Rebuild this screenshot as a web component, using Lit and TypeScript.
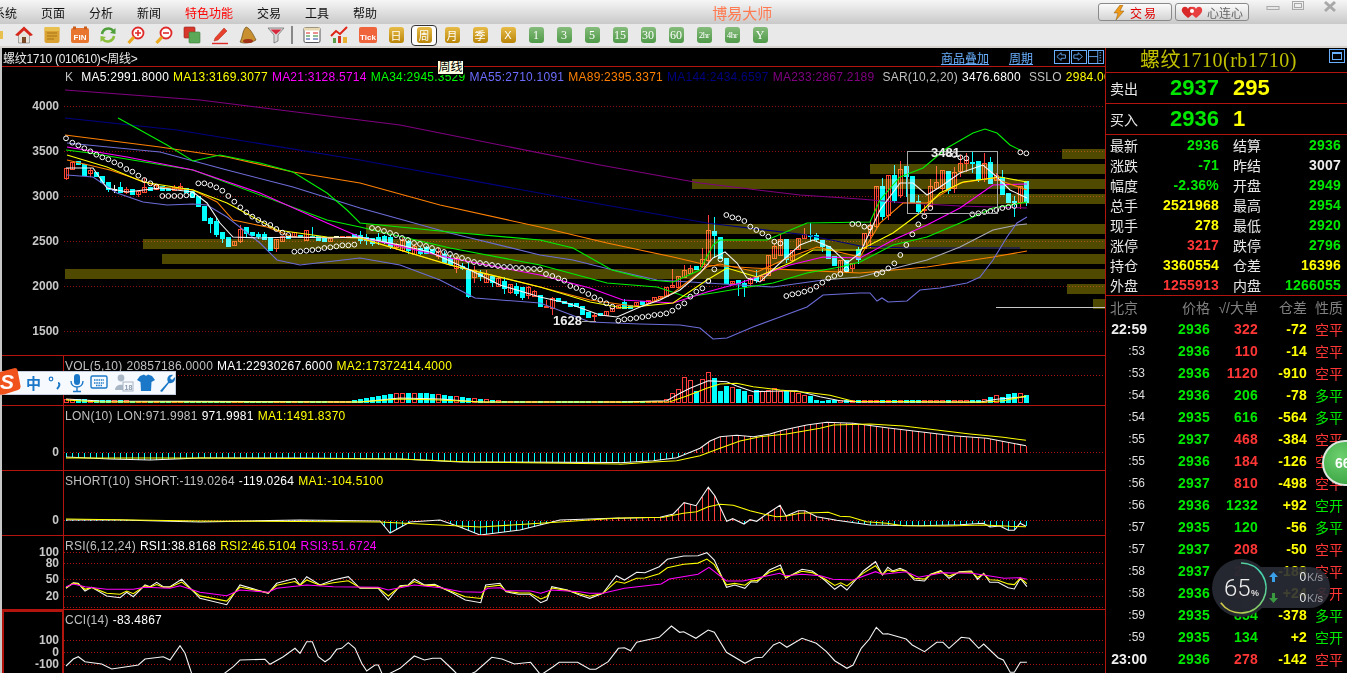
import { LitElement, html, svg, css } from "lit";
import { customElement } from "lit/decorators.js";

type P = [number, number];
const conv = (a: number[], ox: number, oy: number, sx = 3, sy = 3): P[] => {
  const r: P[] = [];
  for (let i = 0; i < a.length; i += 2) r.push([ox + a[i] / sx, oy + a[i + 1] / sy]);
  return r;
};
const Z7 = (a: number[]) => conv(a, 860, 120);
const Z8 = (a: number[]) => conv(a, 540, 200);
const Z10 = (a: number[]) => conv(a, 60, 130);
const Z11 = (a: number[]) => conv(a, 620, 360);
const Z12 = (a: number[]) => conv(a, 400, 535, 2.45, 3);
const Z9 = (a: number[]) => conv(a, 0, 530);
const str = (p: P[]) => p.map((q) => q[0].toFixed(1) + "," + q[1].toFixed(1)).join(" ");
const at = (p: P[], x: number) => {
  if (x <= p[0][0]) return p[0][1];
  for (let i = 1; i < p.length; i++) {
    if (x <= p[i][0]) {
      const t = (x - p[i - 1][0]) / (p[i][0] - p[i - 1][0] || 1);
      return p[i - 1][1] + t * (p[i][1] - p[i - 1][1]);
    }
  }
  return p[p.length - 1][1];
};

const MA5: P[] = [[66, 168], [93, 168], [107, 188], [127, 192], [160, 188], [193, 192], [207, 203], [220, 223], [233, 237], [260, 238], [293, 237], [327, 238], [360, 237], [400, 245], [430, 252], [470, 270], [500, 285], [540, 297], [567, 303], [600, 315], [617, 317], [640, 307], [660, 300], [680, 290], [700, 273], [713, 258], [725, 252], [737, 263], [747, 278], [760, 282], [780, 263], [800, 245], [813, 240], [830, 247], [847, 263], [860, 253], [880, 210], [900, 183], [913, 183], [927, 195], [940, 187], [960, 173], [983, 165], [997, 177], [1010, 190], [1027, 198]];
const LINES: { c: string; p: P[] }[] = [
  { c: "purple", p: [[65, 90], [200, 100], [400, 125], [600, 165], [700, 183], [800, 195], [860, 199], [907, 203], [960, 206], [1027, 208]] },
  { c: "navy", p: [[65, 118], [177, 130], [360, 160], [577, 200], [707, 223], [807, 235], [860, 246], [907, 248], [1020, 248]] },
  { c: "orange", p: [[65, 135], [160, 147], [227, 157], [293, 172], [360, 183], [440, 205], [540, 227], [607, 243], [673, 257], [707, 265], [753, 268], [860, 273], [927, 267], [993, 257], [1027, 251]] },
  { c: "blue", p: [[67, 143], [160, 152], [227, 170], [293, 187], [360, 208], [450, 233], [540, 255], [573, 260], [613, 270], [657, 280], [707, 283], [773, 287], [823, 280]] },
  { c: "grayblue", p: [[823, 280], [860, 277], [927, 260], [960, 247], [993, 230], [1017, 225], [1027, 224]] },
  { c: "blue", p: [[67, 175], [93, 177], [117, 193], [143, 202], [167, 205], [193, 204], [207, 205], [227, 217], [260, 243], [277, 260], [300, 265], [360, 258], [400, 265], [440, 280], [475, 298], [540, 303], [590, 322], [640, 324], [680, 325], [700, 328], [713, 339], [727, 338], [753, 327], [780, 317], [807, 307], [823, 295], [860, 293], [870, 293], [877, 301], [882, 298], [888, 302], [907, 301], [920, 290], [940, 288], [967, 283], [980, 277], [993, 260], [1007, 237], [1017, 223], [1027, 217]] },
  { c: "green", p: [[118, 118], [140, 130], [167, 145], [193, 161], [220, 155], [260, 163], [293, 172], [327, 193], [347, 210], [360, 223], [450, 232], [540, 240], [573, 248], [612, 270], [650, 280], [673, 282], [700, 270], [713, 245], [720, 240], [767, 240], [807, 223], [870, 222], [880, 200], [900, 177], [923, 168], [947, 148], [973, 133], [985, 129], [997, 133], [1010, 145], [1020, 150]] },
  { c: "green", p: [[66, 150], [90, 153], [193, 170], [327, 220], [360, 227], [450, 248], [540, 265], [607, 283], [657, 287], [687, 297], [713, 293], [773, 283], [807, 273], [840, 267], [860, 262], [893, 245], [927, 237], [960, 223], [993, 208], [1027, 202]] },
  { c: "magenta", p: [[67, 147], [127, 157], [193, 170], [260, 193], [327, 223], [360, 237], [450, 258], [540, 275], [590, 288], [623, 300], [673, 303], [707, 292], [740, 283], [790, 265], [823, 257], [860, 258], [893, 240], [927, 225], [960, 208], [993, 185], [1027, 184]] },
  { c: "orange", p: [[67, 160], [110, 170], [160, 187], [193, 190], [217, 202], [233, 220], [267, 227], [293, 237], [360, 238], [450, 265], [540, 287], [590, 300], [640, 307], [673, 293], [707, 267], [720, 264], [757, 272], [790, 257], [817, 247], [860, 257], [880, 223], [903, 203], [927, 203], [960, 183], [993, 178], [1027, 190]] },
  { c: "yellow", p: [[67, 155], [107, 167], [143, 182], [193, 190], [227, 203], [277, 230], [327, 237], [360, 238], [450, 265], [540, 287], [590, 302], [623, 308], [673, 303], [707, 280], [727, 268], [757, 277], [790, 263], [813, 250], [860, 250], [893, 233], [920, 213], [940, 193], [963, 182], [1000, 177], [1027, 182]] },
  { c: "white", p: MA5 },
];

const SAR: P[] = [
  ...Z10([18, 25, 37, 38, 55, 46, 73, 55, 91, 64, 109, 74, 127, 82, 145, 88, 163, 97, 181, 105, 199, 117, 217, 125, 235, 137, 253, 150, 271, 160, 289, 170, 307, 198, 325, 198, 343, 198, 361, 198, 379, 196, 397, 195, 415, 160, 433, 160, 451, 165, 469, 172, 487, 182, 505, 198, 523, 215, 541, 232, 559, 247, 577, 260, 595, 270, 613, 280, 631, 285, 649, 297, 667, 308, 685, 315, 703, 365, 721, 364, 739, 362, 757, 360, 775, 358, 793, 354, 811, 352, 829, 349, 847, 346, 865, 346, 883, 344]),
  [372, 228], [378, 229], [384, 231], [390, 233], [396, 235], [402, 238], [408, 240], [414, 243], [420, 244], [426, 246], [432, 248], [438, 250], [444, 252], [450, 254], [456, 256], [462, 258], [468, 260], [474, 262], [480, 263], [486, 264], [492, 265], [498, 266], [504, 267], [510, 267], [516, 268], [522, 268], [528, 269], [534, 269],
  ...Z8([0, 208, 18, 222, 37, 228, 55, 235, 73, 242, 91, 258, 109, 264, 127, 272, 145, 282, 163, 292, 181, 300, 199, 310, 217, 320, 235, 362, 253, 358, 271, 356, 289, 354, 307, 351, 325, 349, 343, 345, 361, 343, 379, 340, 397, 332, 415, 320, 433, 310, 451, 290, 469, 275, 487, 265, 505, 243, 523, 208, 541, 178, 559, 45, 577, 52, 595, 55, 613, 63, 631, 80, 649, 90, 667, 100, 685, 110, 703, 125, 721, 130, 739, 288, 757, 283, 775, 280, 793, 275, 811, 270, 829, 260, 847, 248, 865, 235, 883, 228, 901, 222, 919, 208, 937, 72, 955, 72]),
  ...Z7([13, 320, 30, 322, 50, 462, 67, 457, 85, 445, 103, 430, 121, 405, 139, 375, 157, 343, 175, 313, 193, 289, 211, 264, 265, 100, 283, 105, 301, 112, 319, 115, 337, 283, 355, 280, 373, 276, 391, 273, 409, 270, 427, 264, 445, 261, 463, 258, 481, 97, 499, 100]),
];

type C = { x: number; t: number; b: number; wt: number; wb: number; c: string };
const tbl = (ox: number, oy: number, rows: (string | number)[][]) =>
  rows.map((r) => {
    const t = oy + (r[2] as number) / 3, b = oy + (r[3] as number) / 3;
    return {
      x: ox + (r[1] as number) / 3, t, b,
      wt: r[4] !== undefined ? oy + (r[4] as number) / 3 : t,
      wb: r[5] !== undefined ? oy + (r[5] as number) / 3 : b,
      c: r[0] as string,
    } as C;
  });
const RAW: C[] = [
  ...tbl(60, 130, [["r", 18, 115, 145, 113, 150], ["r", 37, 97, 118], ["c", 55, 95, 103], ["c", 73, 102, 135], ["r", 91, 122, 130, 115, 142], ["c", 109, 127, 140], ["c", 127, 138, 157], ["c", 145, 157, 178, 155, 185], ["w", 163, 177, 179, 165, 188], ["c", 181, 173, 186, 157, 188], ["r", 199, 178, 187, 172, 192], ["c", 217, 178, 192], ["r", 235, 185, 192, 185, 200], ["r", 253, 173, 187, 145, 187], ["c", 271, 173, 180], ["r", 289, 165, 178], ["c", 307, 170, 180], ["c", 325, 176, 182], ["r", 343, 172, 180, 165, 182], ["r", 361, 170, 178, 158, 180], ["c", 379, 175, 187], ["c", 397, 185, 202], ["c", 415, 200, 230], ["c", 433, 228, 270], ["c", 451, 265, 280, 260, 310], ["c", 469, 275, 313, 260, 320], ["c", 487, 308, 325, 308, 340], ["c", 505, 322, 348], ["r", 523, 333, 345], ["r", 541, 298, 335, 285, 340], ["c", 559, 293, 310, 293, 320], ["c", 577, 308, 316], ["c", 595, 313, 320, 305, 328], ["c", 613, 312, 327, 305, 330], ["c", 631, 322, 362], ["r", 649, 327, 355, 327, 365], ["r", 667, 318, 335], ["c", 685, 318, 325], ["r", 703, 308, 318], ["c", 721, 316, 322], ["r", 739, 300, 332], ["c", 757, 318, 322, 290, 325], ["c", 775, 318, 330], ["c", 793, 325, 335], ["r", 811, 325, 335], ["w", 829, 319, 321], ["r", 847, 318, 322], ["r", 865, 318, 322], ["c", 883, 312, 320]]),
  ...tbl(467, 200, [["c", 0, 210, 290, 190, 295]]),
  ...tbl(540, 200, [["c", 0, 285, 320], ["r", 20, 318, 322, 300, 325], ["r", 38, 295, 325, 290, 345], ["c", 55, 295, 305], ["c", 73, 305, 310], ["c", 91, 310, 318], ["c", 109, 310, 320], ["c", 127, 320, 343], ["c", 145, 338, 352], ["r", 163, 347, 349, 338, 362], ["c", 181, 340, 346], ["r", 199, 335, 345], ["r", 217, 325, 335], ["r", 235, 315, 325], ["c", 253, 308, 325, 298, 325], ["c", 271, 315, 325], ["r", 289, 308, 315], ["c", 307, 305, 312], ["r", 325, 302, 310], ["r", 343, 292, 305], ["r", 361, 290, 294], ["r", 380, 262, 290], ["r", 398, 255, 262, 208, 262], ["r", 415, 228, 262], ["r", 433, 210, 232, 195, 232], ["r", 451, 205, 220, 195, 222], ["c", 469, 200, 208], ["r", 487, 178, 200, 145, 205], ["r", 500, 90, 180, 45, 195], ["c", 522, 95, 105, 50, 175], ["c", 541, 112, 175], ["c", 560, 175, 250], ["r", 578, 245, 250], ["c", 596, 240, 250, 240, 288], ["c", 614, 250, 258, 240, 290], ["r", 632, 235, 250, 230, 262], ["c", 650, 232, 240, 210, 250], ["r", 668, 228, 240], ["r", 686, 165, 225], ["r", 703, 140, 175, 130, 178], ["r", 721, 118, 165, 103, 168], ["c", 739, 118, 178, 118, 188], ["r", 757, 150, 180], ["r", 775, 115, 148], ["r", 793, 103, 115, 85, 118], ["c", 811, 107, 109, 70, 125], ["c", 829, 107, 118, 100, 125], ["c", 847, 120, 140, 120, 155], ["c", 865, 140, 175], ["c", 883, 170, 197], ["r", 901, 180, 215], ["c", 919, 182, 215], ["r", 937, 190, 205, 190, 215]]),
  ...tbl(860, 120, [["r", 14, 340, 385], ["r", 32, 320, 345, 300, 385], ["r", 50, 200, 320, 200, 325], ["c", 68, 200, 290, 175, 300], ["r", 85, 165, 285, 165, 300], ["c", 103, 165, 240, 135, 250], ["r", 121, 148, 225, 122, 235], ["c", 139, 140, 170, 140, 230], ["c", 157, 168, 248], ["c", 175, 245, 275, 225, 280], ["r", 193, 268, 270, 255, 285], ["r", 211, 198, 260, 178, 262], ["r", 229, 186, 205, 138, 205], ["r", 247, 152, 205, 150, 215], ["c", 265, 155, 210, 155, 222], ["r", 283, 158, 205, 140, 218], ["r", 301, 130, 155, 105, 170], ["r", 319, 120, 130, 100, 155], ["c", 337, 127, 129, 95, 160], ["c", 355, 125, 178, 125, 185], ["r", 373, 130, 178, 100, 185], ["c", 391, 128, 190, 110, 190], ["c", 427, 172, 222, 150, 225], ["c", 445, 220, 248], ["c", 463, 243, 248, 228, 290], ["r", 481, 198, 248, 198, 268], ["c", 499, 185, 248, 185, 258]]),
];
const CANDLES: C[] = (() => {
  const slots = new Map<number, C>();
  for (const c of RAW) slots.set(Math.round((1026 - c.x) / 6), c);
  let s = 12345;
  const rnd = () => ((s = (s * 1103515245 + 12345) & 0x7fffffff) / 0x7fffffff);
  const out: C[] = [];
  for (let k = 160; k >= 0; k--) {
    const x = 1026 - 6 * k;
    const have = slots.get(k);
    if (have) { out.push({ ...have, x }); continue; }
    const m = at(MA5, x) + (rnd() - 0.5) * 6;
    const h = 2 + rnd() * 8;
    const c = rnd() > 0.5 ? "c" : "r";
    out.push({ x, t: m - h / 2, b: m + h / 2, wt: m - h / 2 - rnd() * 5, wb: m + h / 2 + rnd() * 5, c });
  }
  return out;
})();

const OLIVE: number[][] = [[1062, 149], [870, 164], [692, 179], [907, 194], [366, 224], [143, 239], [162, 254], [65, 269], [1067, 284], [1093, 299]];

const VOL_BIG: Map<number, [number, string]> = (() => {
  const m = new Map<number, [number, string]>();
  const rows: [number, number, string][] = [[138, 118, "r"], [156, 100, "r"], [174, 88, "r"], [192, 52, "r"], [210, 62, "r"], [228, 93, "c"], [246, 58, "r"], [264, 37, "r"], [282, 54, "c"], [300, 93, "c"], [318, 78, "c"], [336, 82, "r"], [354, 87, "c"], [372, 93, "c"], [390, 105, "r"], [408, 92, "c"], [426, 95, "r"], [444, 92, "r"], [462, 85, "r"], [480, 95, "r"], [498, 93, "c"], [516, 93, "r"], [534, 100, "r"], [552, 105, "r"], [570, 110, "c"], [588, 122, "c"], [606, 123, "c"], [624, 122, "c"], [1074, 120, "c"], [1092, 118, "r"], [1110, 111, "c"], [1128, 106, "r"], [1146, 112, "c"], [1164, 102, "c"], [1182, 99, "c"], [1200, 100, "r"], [1218, 105, "c"]];
  for (const [zx, zy, c] of rows) m.set(Math.round(620 + zx / 3), [360 + zy / 3, c]);
  return m;
})();
const VOL_ENV: P[] = [[66, 399], [90, 400], [130, 401], [200, 401], [350, 401], [362, 399], [385, 395], [405, 393], [430, 394], [450, 396], [475, 399], [500, 401], [660, 401]];

const LON_W: P[] = [[66, 457], [110, 459], [150, 460], [200, 458], [300, 458], [400, 459], [460, 462], [619, 462.5], ...Z11([0, 308, 100, 302, 170, 293, 240, 265, 270, 243, 300, 230, 350, 226, 400, 230, 450, 222, 490, 210, 560, 195, 620, 187, 700, 190, 800, 203, 900, 215, 1000, 227, 1100, 235, 1218, 257])];
const LON_Y: P[] = [[66, 458], [200, 458], [400, 459], [470, 462], [619, 464], ...Z11([0, 313, 100, 306, 170, 302, 240, 287, 300, 265, 360, 243, 420, 230, 500, 222, 600, 205, 640, 195, 750, 192, 850, 198, 950, 210, 1050, 222, 1150, 232, 1218, 241])];
const SH_W: P[] = [[66, 520], [120, 520], [200, 522], [300, 520], [380, 521], [390, 533], [410, 522], [440, 520], [460, 527], [480, 535], [520, 530], [560, 520], [619, 518], ...Z11([0, 475, 120, 472, 160, 462, 192, 428, 228, 437, 265, 382, 285, 408, 320, 484, 338, 476, 372, 492, 390, 479, 410, 484, 440, 462, 480, 436, 498, 468, 535, 452, 555, 452, 590, 470, 650, 481, 750, 495, 900, 497, 1020, 494, 1090, 490, 1110, 501, 1140, 498, 1165, 511, 1183, 511, 1200, 490, 1218, 499])];
const SH_Y: P[] = [[66, 519], [200, 521], [380, 522], [420, 524], [480, 527], [560, 522], [619, 518], ...Z11([0, 474, 130, 472, 190, 460, 230, 455, 265, 440, 300, 433, 340, 436, 390, 452, 430, 462, 470, 470, 500, 468, 540, 460, 625, 457, 660, 469, 690, 470, 740, 485, 800, 490, 850, 497, 980, 498, 1090, 495, 1170, 499, 1218, 500])];
const VOL_W: P[] = [[66, 399], [100, 401], [360, 402], [400, 398], [440, 399], [480, 402], [619, 402], ...Z11([0, 126, 140, 122, 180, 100, 210, 85, 265, 62, 320, 65, 350, 78, 400, 95, 480, 93, 530, 92, 600, 110, 660, 122, 720, 126, 1080, 126, 1130, 118, 1218, 110])];
const VOL_Y: P[] = [[66, 400], [100, 402], [360, 402], [400, 399], [440, 400], [480, 402], [619, 402], ...Z11([0, 127, 150, 125, 200, 108, 260, 85, 300, 72, 350, 70, 400, 80, 480, 90, 570, 98, 630, 106, 700, 124, 1090, 127, 1150, 122, 1218, 108])];

const RSI_W: P[] = [...Z9([198, 175, 220, 158, 235, 160, 255, 183, 275, 172, 320, 198, 360, 203, 380, 187, 400, 200, 435, 165, 450, 170, 470, 157, 490, 170, 510, 170, 545, 148, 600, 205, 680, 224, 720, 165, 805, 190, 830, 160, 885, 145, 900, 165, 920, 140, 960, 165, 1000, 150, 1045, 140, 1080, 175, 1135, 175, 1165, 210]), ...Z12([0, 152, 20, 150, 35, 133, 60, 150, 85, 148, 130, 175, 160, 195, 198, 203, 210, 150, 245, 145, 260, 170, 290, 178, 318, 178, 345, 203, 360, 195, 372, 155, 410, 165, 440, 180, 465, 190, 497, 175, 530, 122, 550, 135, 580, 112, 600, 113, 635, 95, 655, 73, 695, 63, 730, 62, 752, 53, 770, 75, 800, 157, 820, 150, 845, 160, 860, 140, 875, 142, 905, 105, 932, 90, 945, 130, 985, 103, 1010, 108, 1040, 135, 1065, 163, 1080, 150, 1095, 165, 1135, 108, 1165, 80, 1182, 120, 1195, 97, 1207, 108, 1225, 100, 1240, 108, 1260, 135, 1285, 138, 1300, 118, 1325, 107, 1345, 130, 1370, 110, 1400, 108, 1415, 133, 1430, 115, 1445, 142, 1465, 142, 1490, 158, 1505, 162, 1520, 130, 1536, 155])];
const RSI_M: P[] = [...Z9([198, 170, 220, 162, 255, 170, 320, 178, 360, 178, 400, 178, 435, 172, 510, 175, 540, 167, 600, 187, 680, 197, 720, 180, 805, 187, 830, 175, 920, 165, 1000, 170, 1135, 172, 1165, 180]), ...Z12([0, 158, 35, 150, 100, 158, 150, 170, 200, 172, 215, 160, 245, 158, 260, 167, 320, 168, 345, 175, 370, 165, 440, 170, 465, 175, 497, 175, 550, 160, 640, 147, 660, 132, 730, 118, 757, 97, 800, 138, 840, 138, 930, 115, 945, 122, 985, 118, 1030, 122, 1060, 133, 1110, 135, 1165, 110, 1182, 118, 1240, 110, 1270, 127, 1330, 113, 1400, 115, 1430, 120, 1480, 130, 1520, 128, 1536, 133])];
const RSI_Y: P[] = RSI_W.map((p) => [p[0], p[1] * 0.6 + at(RSI_M, p[0]) * 0.4] as P);
const CCI: P[] = [...Z9([198, 408, 220, 387, 235, 380, 255, 395, 305, 402, 335, 417, 415, 405, 435, 387, 490, 380, 510, 390, 540, 347, 555, 370, 578, 440, 660, 440, 700, 410, 720, 390, 795, 388, 810, 403, 850, 380, 885, 355, 900, 370, 920, 335, 937, 335, 955, 380, 975, 395, 990, 385, 1010, 358, 1025, 355, 1045, 338, 1065, 355, 1085, 400, 1100, 423, 1125, 405, 1135, 405, 1150, 440]), ...Z12([0, 400, 35, 363, 60, 375, 80, 370, 100, 370, 130, 405, 150, 430, 185, 410, 225, 367, 250, 372, 280, 387, 320, 382, 345, 420, 375, 395, 390, 382, 435, 382, 465, 403, 480, 403, 510, 380, 535, 340, 550, 338, 565, 347, 580, 322, 635, 307, 665, 273, 685, 292, 695, 290, 725, 310, 755, 285, 770, 292, 800, 352, 845, 385, 870, 368, 888, 367, 915, 330, 930, 322, 948, 337, 985, 310, 1020, 325, 1045, 350, 1065, 377, 1095, 400, 1110, 390, 1130, 340, 1150, 312, 1167, 277, 1183, 297, 1195, 296, 1240, 312, 1255, 330, 1285, 350, 1315, 322, 1330, 322, 1345, 340, 1375, 307, 1395, 310, 1418, 340, 1430, 327, 1465, 368, 1478, 375, 1495, 412, 1505, 412, 1520, 382, 1536, 382])];

const STATS = [
  ["最新", "2936", "g", "结算", "2936", "g"], ["涨跌", "-71", "g", "昨结", "3007", "w"],
  ["幅度", "-2.36%", "g", "开盘", "2949", "g"], ["总手", "2521968", "y", "最高", "2954", "g"],
  ["现手", "278", "y", "最低", "2920", "g"], ["涨停", "3217", "r", "跌停", "2796", "g"],
  ["持仓", "3360554", "y", "仓差", "16396", "y"], ["外盘", "1255913", "r", "内盘", "1266055", "g"],
];
const TRADES = [
  ["22:59", "2936", "322", "r", "-72", "空平", "r"], [":53", "2936", "110", "r", "-14", "空平", "r"],
  [":53", "2936", "1120", "r", "-910", "空平", "r"], [":54", "2936", "206", "g", "-78", "多平", "g"],
  [":54", "2935", "616", "g", "-564", "多平", "g"], [":55", "2937", "468", "r", "-384", "空平", "r"],
  [":55", "2936", "184", "r", "-126", "空平", "r"], [":56", "2937", "810", "r", "-498", "空平", "r"],
  [":56", "2936", "1232", "g", "+92", "空开", "g"], [":57", "2935", "120", "g", "-56", "多平", "g"],
  [":57", "2937", "208", "r", "-50", "空平", "r"], [":58", "2937", "218", "r", "-188", "空平", "r"],
  [":58", "2936", "156", "r", "+24", "多开", "r"], [":59", "2935", "854", "g", "-378", "多平", "g"],
  [":59", "2935", "134", "g", "+2", "空开", "g"], ["23:00", "2936", "278", "r", "-142", "空平", "r"],
];
const MENU = ["系统", "页面", "分析", "新闻", "特色功能", "交易", "工具", "帮助"];
const PERIODS: [string, string][] = [["日", "gold"], ["周", "gold sel"], ["月", "gold"], ["季", "gold"], ["X", "gold"], ["1", "grn"], ["3", "grn"], ["5", "grn"], ["15", "grn"], ["30", "grn"], ["60", "grn"], ["2hr", "grn nar"], ["4hr", "grn nar"], ["Y", "grn"]];

const ICONS = [
  svg`<path d="M2 10 L10 2.5 L18 10 L15.5 10 L15.5 18 L4.5 18 L4.5 10Z" fill="#e8e4dc" stroke="#777" stroke-width=".6"/><path d="M1 10 L10 1.5 L19 10 L16 11 L10 5.5 L4 11Z" fill="#d8281c"/><rect x="8" y="12" width="4" height="6" fill="#7a4a28"/>`,
  svg`<rect x="2.5" y="2" width="15" height="16" rx="2" fill="#d9a233"/><rect x="2.5" y="2" width="15" height="4" fill="#e8c050"/><path d="M5 8h10M5 11h10M5 14h7" stroke="#a87414" stroke-width="1"/>`,
  svg`<rect x="1" y="3" width="18" height="15" rx="2" fill="#e8762e"/><rect x="3" y="1.5" width="3" height="3" fill="#c85a1c"/><rect x="14" y="1.5" width="3" height="3" fill="#c85a1c"/><text x="10" y="15" text-anchor="middle" class="ict">FIN</text>`,
  svg`<path d="M4 9 A6.5 6.5 0 0 1 15.5 6" fill="none" stroke="#4fa03a" stroke-width="2.6"/><path d="M17.5 3 L17.5 9 L12 8Z" fill="#4fa03a"/><path d="M16 11 A6.5 6.5 0 0 1 4.5 14" fill="none" stroke="#8bbf3c" stroke-width="2.6"/><path d="M2.5 17 L2.5 11 L8 12Z" fill="#8bbf3c"/>`,
  svg`<circle cx="12" cy="8" r="5.5" fill="#fff" stroke="#e02a2a" stroke-width="1.8"/><path d="M9 8h6M12 5v6" stroke="#e02a2a" stroke-width="1.6"/><path d="M8 12 L2.5 18" stroke="#eaa81e" stroke-width="3.2"/>`,
  svg`<circle cx="12" cy="8" r="5.5" fill="#fff" stroke="#e02a2a" stroke-width="1.8"/><path d="M9 8h6" stroke="#e02a2a" stroke-width="1.6"/><path d="M8 12 L2.5 18" stroke="#eaa81e" stroke-width="3.2"/>`,
  svg`<rect x="2" y="2" width="11" height="11" rx="1" fill="#d8382c" stroke="#96201a" stroke-width=".6"/><rect x="7" y="7" width="11" height="11" rx="1" fill="#5aa858" stroke="#3e7c3c" stroke-width=".6"/>`,
  svg`<path d="M5 13 L14 3 L17 6 L8 15 L4 16Z" fill="#e8402c" stroke="#a82818" stroke-width=".5"/><path d="M2 18.5h16" stroke="#e02a2a" stroke-width="1.4"/>`,
  svg`<path d="M8 2 C12 3 15 9 18 15 C13 18 6 19 2 17 C5 12 4 6 8 2Z" fill="#c89030" stroke="#6a4a18" stroke-width=".7"/><ellipse cx="10" cy="16" rx="5" ry="2" fill="#a03018"/>`,
  svg`<path d="M2 3 H18 L12 10 V16 L8 18 V10Z" fill="#d8d8d8" stroke="#666" stroke-width=".7"/><path d="M4.5 4.5 H15.5 L10 9.5Z" fill="#d8283c"/>`,
  svg`<rect x="2" y="2.5" width="16" height="15" rx="1.5" fill="#fff" stroke="#555" stroke-width="1"/><rect x="2" y="2.5" width="16" height="3" fill="#e8d8b0"/><path d="M4 8h4M11 8h5" stroke="#d82020" stroke-width="1.2"/><path d="M4 11h4M11 11h5" stroke="#208020" stroke-width="1.2"/><path d="M4 14h4M11 14h5" stroke="#2040a0" stroke-width="1.2"/>`,
  svg`<rect x="3" y="13" width="3" height="5" fill="#5a9a48"/><rect x="8" y="11" width="3" height="7" fill="#d83020"/><rect x="13" y="12" width="4" height="6" fill="#e8b030"/><path d="M1 11 L6 6 L10 9 L17 2" fill="none" stroke="#e02418" stroke-width="2"/>`,
  svg`<rect x="1" y="2" width="18" height="16" rx="2" fill="#f0643c"/><text x="10" y="14.5" text-anchor="middle" class="ict">Tick</text>`,
];

@customElement("app-root")
export class AppRoot extends LitElement {
  static styles = css`
    :host { display: block; position: relative; width: 1347px; height: 673px; overflow: hidden; background: #000; font-family: "Liberation Sans", "Noto Sans CJK SC", sans-serif; font-size: 12px; }
    .menubar { height: 24px; display: flex; align-items: center; background: linear-gradient(#f6f6f6, #e4e4e4 40%, #c9c9c9); color: #111; }
    .menu { display: flex; gap: 24px; margin-left: -7px; font-size: 12px; }
    .menu .hot { color: #f00; }
    .brand { margin-left: 335px; width: 60px; color: #ff7a50; font-size: 15px; white-space: nowrap; }
    .rbtns { display: flex; gap: 3px; margin-left: 326px; }
    .rbtn { width: 72px; height: 16px; border: 1px solid #8a8a8a; border-radius: 3px; background: linear-gradient(#fbfbfb, #d4d4d4); display: flex; align-items: center; justify-content: center; gap: 4px; font-size: 12px; color: #666; }
    .rbtn.tr { color: #e00000; letter-spacing: 2px; }
    .win { display: flex; gap: 5px; margin-left: 14px; align-self: flex-start; }
    .win svg { display: block; }
    .win svg:last-child { margin-left: 7px; }
    .toolbar { height: 22px; background: #e9e9e9; display: flex; align-items: center; border-bottom: 2px solid #d6d2ce; }
    .fold { width: 3px; height: 8px; background: #e8c050; margin-right: 7px; }
    .ti { width: 28px; height: 22px; display: flex; align-items: center; justify-content: center; flex: none; }
    .ti svg { display: block; }
    .ict { font: bold 8px "Liberation Sans", sans-serif; fill: #fff; }
    .sep { width: 2px; height: 18px; background: #888; margin: 0 5px 0 1px; flex: none; }
    .pb { width: 15px; height: 16px; border-radius: 3px; color: #fff; display: flex; align-items: center; justify-content: center; font-size: 11px; box-sizing: border-box; white-space: nowrap; overflow: hidden; }
    .pb.gold { background: linear-gradient(#e8bc48, #b98508); }
    .pb.grn { background: linear-gradient(#86bc7c, #4f9a48); font-family: "Liberation Serif", serif; font-size: 12px; }
    .pb.nar { font-size: 9px; letter-spacing: -0.5px; }
    .ti.sel { border: 1px solid #333; border-radius: 4px; background: #fff; box-sizing: border-box; height: 21px; width: 26px; margin: 0 1px; }
    .main { display: flex; height: 625px; }
    .left { width: 1103px; padding-left: 2px; background: #c8c8c8; display: grid; grid-template-rows: 19px 289px 50px 65px 65px 74px 63px; }
    .hdr { background: #000; color: #e8e8e8; display: flex; align-items: center; padding-left: 1px; border-bottom: 1px solid #b4140e; box-sizing: border-box; letter-spacing: -0.3px; white-space: nowrap; }
    .links { margin-left: auto; display: flex; align-items: center; color: #6ab0ff; letter-spacing: 0; }
    .links u { margin-right: 20px; }
    .links u + u { margin-right: 21px; }
    .minib { width: 16px; height: 14px; border: 1px solid #6ab0ff; box-sizing: border-box; margin-right: 1px; display: block; }
    .panel { position: relative; background: #000; display: flex; border-bottom: 1px solid #b4140e; box-sizing: border-box; overflow: hidden; min-width: 0; }
    .panel:last-child { border-bottom: 0; }
    .axis { width: 61px; flex: none; border-right: 1px solid #b4140e; }
    .axis.active { border: 2px solid #b4140e; border-bottom: 0; box-sizing: border-box; width: 62px; }
    .plot { flex: 1; min-width: 0; overflow: hidden; }
    .chart { position: absolute; left: 0; top: 0; display: block; }
    .legend { position: relative; display: flex; gap: 4px; white-space: nowrap; padding: 3px 0 0 1px; line-height: 14px; font-size: 12px; letter-spacing: 0.24px; color: #c0c0c0; }
    .lg { color: #c0c0c0; } .lw { color: #fff; } .ly { color: #ff0; } .lm { color: #f0f; } .lgr { color: #0f0; }
    .lb { color: #6c6cff; } .lo { color: #ff8000; } .ln { color: #000080; } .lp { color: #800080; }
    .k { margin-right: 4px; }
    .m4 { margin-right: 4px; }
    polyline { fill: none; stroke-width: 1.1; }
    .white { stroke: #f4f4f4; } .yellow { stroke: #ffff00; } .magenta { stroke: #ff00ff; } .green { stroke: #00f000; }
    .orange { stroke: #ff8000; } .purple { stroke: #800080; } .navy { stroke: #000080; } .blue { stroke: #6c6cd8; } .grayblue { stroke: #a8a8b8; }
    .grid { stroke: #b01010; stroke-width: 1; stroke-dasharray: 1 2; shape-rendering: crispEdges; }
    .grid2 { stroke: #8a1010; stroke-width: 1; stroke-dasharray: 1 2; shape-rendering: crispEdges; }
    .olive { fill: #4f4a00; mix-blend-mode: screen; }
    .bl { fill: #000; }
    .cr { fill: none; stroke: #ff4a32; shape-rendering: crispEdges; }
    .cc { fill: #00ffff; stroke: #00ffff; shape-rendering: crispEdges; }
    .cw { fill: #fff; stroke: #fff; shape-rendering: crispEdges; }
    .wr { stroke: #ff3c3c; shape-rendering: crispEdges; }
    .wc { stroke: #00ffff; shape-rendering: crispEdges; }
    .vr { fill: none; stroke: #ff3c3c; shape-rendering: crispEdges; }
    .dot { fill: none; stroke: #fff; stroke-width: 1; }
    .rect { fill: none; stroke: #a8a8a8; shape-rendering: crispEdges; }
    .axt { font: bold 12px "Liberation Sans", sans-serif; fill: #c8c8c8; text-anchor: end; }
    .mark { font: bold 13px "Liberation Sans", sans-serif; fill: #eee; }
    .tip { position: absolute; left: 437px; top: 60px; width: 27px; height: 15px; box-sizing: border-box; background: #ffffe1; border: 1px solid #000; color: #000; font-size: 12px; line-height: 13px; text-align: center; }
    .right { width: 242px; border-left: 1px solid #b4140e; box-sizing: border-box; background: #000; color: #e8e8e8; position: relative; overflow: hidden; }
    .title { height: 25px; box-sizing: border-box; border-bottom: 1px solid #b4140e; color: #c0c000; font: 20px/24px "Liberation Serif", "Noto Sans CJK SC", serif; text-align: center; padding-right: 16px; letter-spacing: 0.5px; white-space: nowrap; }
    .tbtn { position: absolute; right: 2px; top: 1px; width: 16px; height: 14px; border: 1px solid #6ab0ff; box-sizing: border-box; }
    .tbtn::after { content: ""; position: absolute; left: 2px; right: 2px; top: 2px; bottom: 2px; border: 1px solid #6ab0ff; border-top-width: 2px; }
    .quote { display: grid; grid-template-columns: 28px 81px 100px; height: 31px; align-items: center; padding-left: 4px; border-bottom: 1px solid #b4140e; box-sizing: border-box; font-size: 14px; }
    .big { font: bold 22px "Liberation Sans", sans-serif; text-align: right; }
    .big.qty { text-align: left; padding-left: 14px; color: #ff0; }
    .stats { display: grid; grid-template-columns: 28px 81px 42px 80px; grid-auto-rows: 20px; align-items: center; padding-left: 4px; height: 161px; box-sizing: border-box; border-bottom: 1px solid #b4140e; font-size: 14px; }
    .l2 { padding-left: 14px; }
    .v { font: bold 14px "Liberation Sans", sans-serif; text-align: right; letter-spacing: 0.2px; }
    .g { color: #00e800; } .r { color: #ff3636; } .y { color: #ff0; } .w { color: #eee; }
    .thead, .trow { display: grid; grid-template-columns: 37px 63px 48px 49px 35px; padding-left: 4px; align-items: center; }
    .thead { height: 22px; color: #808080; font-size: 14px; white-space: nowrap; }
    .thead > :nth-child(n+2):nth-child(-n+4) { text-align: right; }
    .thead > :last-child, .ty { padding-left: 8px; }
    .trow { height: 22px; font-size: 14px; }
    .tm { text-align: right; font: 12px "Liberation Sans", sans-serif; color: #ddd; padding-right: 2px; }
    .tm.full { font: bold 14px "Liberation Sans", sans-serif; color: #eee; padding-right: 0; }
    .ty { white-space: nowrap; }
    .sg { position: absolute; left: 0; top: 371px; width: 176px; height: 24px; box-sizing: border-box; background: #f6f9fd; border: 1px solid #c4cede; border-left: 0; display: block; }
    .sg svg { display: block; overflow: visible; }
    .slogo { font: italic bold 21px "Liberation Sans", sans-serif; fill: #fff; }
    .szh { font: bold 15px "Noto Sans CJK SC", sans-serif; fill: #1b78c8; }
    .s18 { font: bold 7px "Liberation Sans", sans-serif; fill: #8a9aae; }
    .bubble { position: absolute; left: 1322px; top: 440px; width: 46px; height: 46px; box-sizing: border-box; border-radius: 50%; background: radial-gradient(circle at 40% 35%, #6ed06e, #2f9a3a); border: 2px solid #dfe6df; color: #fff; font: bold 14px/42px "Liberation Sans", sans-serif; padding-left: 11px; overflow: hidden; }
    .pill { position: absolute; left: 1241px; top: 567px; width: 89px; height: 41px; border-radius: 0 20px 20px 0; background: rgba(42, 44, 54, 0.9); color: #9a9ca4; font: 11px "Liberation Sans", sans-serif; display: grid; grid-template-rows: 1fr 1fr; padding: 0 7px 0 0; box-sizing: border-box; }
    .pill div { display: flex; align-items: center; justify-content: flex-end; gap: 1px; }
    .pill b { color: #eee; font-weight: 400; font-size: 12px; }
    .pill svg { margin-right: 20px; display: block; }
    .gauge { position: absolute; left: 1212px; top: 559px; width: 58px; height: 58px; }
    .gauge svg { display: block; }
    .gn { font: 300 24px Roboto, "Liberation Sans", sans-serif; fill: #eee; }
    .gp { font: bold 9px "Liberation Sans", sans-serif; fill: #ddd; }
  `;

  private line(p: P[], c: string) {
    return svg`<polyline class=${c} points=${str(p)}></polyline>`;
  }

  private gridL(ys: number[], cls = "grid") {
    return ys.map((y) => svg`<line class=${cls} x1="64" x2="1105" y1=${y + 0.5} y2=${y + 0.5}></line>`);
  }

  private labels(items: [string, number][]) {
    return items.map(([t, y]) => svg`<text class="axt" x="59" y=${y + 4}>${t}</text>`);
  }

  private stage(top: number, h: number, body: unknown) {
    return html`<svg class="chart" width="1103" height=${h} viewBox="2 ${top} 1103 ${h}">${body}</svg>`;
  }

  private mainChart() {
    return svg`
      <rect class="bl" x="2" y="67" width="1103" height="289"></rect>
      ${this.gridL([106, 151, 196, 241, 286, 331], "grid2")}
      ${CANDLES.map((c) => svg`
        <line class=${c.c === "r" ? "wr" : c.c === "w" ? "cw" : "wc"} x1=${c.x + 0.5} x2=${c.x + 0.5} y1=${c.wt} y2=${c.wb}></line>
        <rect class=${c.c === "r" ? "cr" : c.c === "w" ? "cw" : "cc"} x=${c.x - 1.5} y=${c.t} width="4" height=${Math.max(c.b - c.t, 1)}></rect>`)}
      ${OLIVE.map(([x, y]) => svg`<rect class="olive" x=${x} y=${y} width=${1105 - x} height="10"></rect>`)}
      ${LINES.map((l) => this.line(l.p, l.c))}
      ${SAR.map(([x, y]) => svg`<circle class="dot" cx=${x} cy=${y} r="2.4"></circle>`)}
      <rect class="rect" x="907.5" y="151.5" width="90" height="62"></rect>
      <path d="M996 307.5H1105" stroke="#c8c8c8" fill="none"></path>
      <path d="M582 321.5H596" stroke="#aaa" fill="none"></path>
      <text class="mark" x="553" y="325">1628</text>
      <text class="mark" x="931" y="157">3481</text>
      ${this.labels([["4000", 106], ["3500", 151], ["3000", 196], ["2500", 241], ["2000", 286], ["1500", 331]])}
    `;
  }

  private volChart() {
    return svg`
      ${this.gridL([375])}
      ${CANDLES.map((c) => {
        const big = VOL_BIG.get(c.x);
        const top = big ? big[0] : c.x > 660 ? 400.5 : at(VOL_ENV, c.x);
        const col = big ? big[1] : c.c === "w" ? "r" : c.c;
        return svg`<rect class=${col === "r" ? "vr" : "cc"} x=${c.x - 1.5} y=${top} width="4" height=${Math.max(402 - top, 1)}></rect>`;
      })}
      ${this.line(VOL_W, "white")}${this.line(VOL_Y, "yellow")}
    `;
  }

  private barsChart(zero: number, p: P[], y: P[], lab: [string, number][]) {
    return svg`
      ${this.gridL([zero])}
      ${CANDLES.map((c) => {
        const v = at(p, c.x);
        return svg`<line class=${v < zero ? "wr" : "wc"} x1=${c.x + 0.5} x2=${c.x + 0.5} y1=${zero + 0.5} y2=${v}></line>`;
      })}
      ${this.line(p, "white")}${this.line(y, "yellow")}
      ${this.labels(lab)}
    `;
  }

  private icon(i: number) {
    return html`<div class="ti"><svg width="20" height="20" viewBox="0 0 20 20">${ICONS[i]}</svg></div>`;
  }

  render() {
    return html`
      <div class="menubar">
        <div class="menu">${MENU.map((m) => html`<span class=${m === "特色功能" ? "hot" : ""}>${m}</span>`)}</div>
        <div class="brand">博易大师</div>
        <div class="rbtns">
          <div class="rbtn tr"><svg width="14" height="15" viewBox="0 0 14 15"><path d="M8 0 L2 8 L6 8 L4 15 L12 6 L8 6 L11 0Z" fill="#f09a18" stroke="#8a5a10" stroke-width=".5"/></svg>交易</div>
          <div class="rbtn"><svg width="22" height="14" viewBox="0 0 22 14"><path d="M7 13 C2 9 0 6 1 4 C2 1 6 1 7 4 C8 1 12 1 13 4 C14 7 11 10 7 13Z" fill="#d82828"/><path d="M15 13 C10 9 8 6 9 4 C10 1 14 1 15 4 C16 1 20 1 21 4 C22 7 19 10 15 13Z" fill="#e84040"/><circle cx="11" cy="6" r="2" fill="#fff"/></svg>心连心</div>
        </div>
        <div class="win">
          <svg width="20" height="16" viewBox="0 0 20 16"><rect x="4" y="6.500" width="12" height="3" fill="#e6e6e6" stroke="#a8a8a8"/></svg>
          <svg width="20" height="16" viewBox="0 0 20 16"><rect x="4.500" y="1.500" width="11" height="8" fill="none" stroke="#a8a8a8"/><rect x="6.500" y="3.500" width="7" height="4" fill="#eee" stroke="#a8a8a8"/></svg>
          <svg width="20" height="16" viewBox="0 0 20 16"><path d="M5 2 L15 11 M15 2 L5 11" stroke="#a8a8a8" stroke-width="3"/></svg>
        </div>
      </div>
      <div class="toolbar">
        <div class="fold"></div>
        ${[0, 1, 2, 3, 4, 5, 6, 7, 8, 9].map((i) => this.icon(i))}
        <div class="sep"></div>
        ${[10, 11, 12].map((i) => this.icon(i))}
        ${PERIODS.map(([t, c]) => {
          const sel = c.includes("sel");
          return html`<div class="ti ${sel ? "sel" : ""}"><div class="pb ${c.replace(" sel", "")}">${t}</div></div>`;
        })}
      </div>
      <div class="main">
        <div class="left">
          <div class="hdr">
            <span>螺纹1710 (010610)&lt;周线&gt;</span>
            <div class="links"><u>商品叠加</u><u>周期</u>
              <svg class="minib" width="16" height="14" viewBox="0 0 16 14"><path d="M12 4.500H7V2L2 6.500 7 11V8.500H12Z" fill="none" stroke="#6ab0ff"/></svg>
              <svg class="minib" width="16" height="14" viewBox="0 0 16 14"><path d="M2 4.500H7V2L12 6.500 7 11V8.500H2Z" fill="none" stroke="#6ab0ff"/></svg>
              <svg class="minib" width="16" height="14" viewBox="0 0 16 14"><path d="M0 6.500H10M10 0V14M12 2h2M12 5h2M12 8h2M12 11h2" fill="none" stroke="#6ab0ff"/></svg>
            </div>
          </div>
          <div class="panel">
            ${this.stage(67, 289, this.mainChart())}
            <div class="axis"></div>
            <div class="plot"><div class="legend">
              <span class="lg k">K</span><span class="lw">MA5:2991.8000</span><span class="ly">MA13:3169.3077</span><span class="lm">MA21:3128.5714</span><span class="lgr">MA34:2945.3529</span><span class="lb">MA55:2710.1091</span><span class="lo">MA89:2395.3371</span><span class="ln">MA144:2434.6597</span><span class="lp m4">MA233:2867.2189</span><span class="lg">SAR(10,2,20)</span><span class="lw m4">3476.6800</span><span class="lg">SSLO</span><span class="ly">2984.0000</span>
            </div></div>
          </div>
          <div class="panel">
            ${this.stage(356, 50, this.volChart())}
            <div class="axis"></div>
            <div class="plot"><div class="legend"><span class="lg">VOL(5,10)</span><span class="lg">20857186.0000</span><span class="lw">MA1:22930267.6000</span><span class="ly">MA2:17372414.4000</span></div></div>
          </div>
          <div class="panel">
            ${this.stage(406, 65, this.barsChart(452, LON_W, LON_Y, [["0", 452]]))}
            <div class="axis"></div>
            <div class="plot"><div class="legend"><span class="lg">LON(10)</span><span class="lg">LON:971.9981</span><span class="lw">971.9981</span><span class="ly">MA1:1491.8370</span></div></div>
          </div>
          <div class="panel">
            ${this.stage(471, 65, this.barsChart(520, SH_W, SH_Y, [["0", 520]]))}
            <div class="axis"></div>
            <div class="plot"><div class="legend"><span class="lg">SHORT(10)</span><span class="lg">SHORT:-119.0264</span><span class="lw">-119.0264</span><span class="ly">MA1:-104.5100</span></div></div>
          </div>
          <div class="panel">
            ${this.stage(536, 74, svg`${this.gridL([552, 563, 579, 596, 607])}${this.line(RSI_W, "white")}${this.line(RSI_Y, "yellow")}${this.line(RSI_M, "magenta")}${this.labels([["100", 552], ["80", 563], ["50", 579], ["20", 596]])}`)}
            <div class="axis"></div>
            <div class="plot"><div class="legend"><span class="lg">RSI(6,12,24)</span><span class="lw">RSI1:38.8168</span><span class="ly">RSI2:46.5104</span><span class="lm">RSI3:51.6724</span></div></div>
          </div>
          <div class="panel">
            ${this.stage(610, 63, svg`${this.gridL([640, 652, 664])}${this.line(CCI, "white")}${this.labels([["100", 640], ["0", 652], ["-100", 664]])}`)}
            <div class="axis active"></div>
            <div class="plot"><div class="legend"><span class="lg">CCI(14)</span><span class="lw">-83.4867</span></div></div>
          </div>
        </div>
        <div class="right">
          <div class="title">螺纹1710(rb1710)</div>
          <div class="tbtn"></div>
          <div class="quote"><span>卖出</span><span class="big g">2937</span><span class="big qty">295</span></div>
          <div class="quote"><span>买入</span><span class="big g">2936</span><span class="big qty">1</span></div>
          <div class="stats">
            ${STATS.map((s) => html`<span>${s[0]}</span><span class="v ${s[2]}">${s[1]}</span><span class="l2">${s[3]}</span><span class="v ${s[5]}">${s[4]}</span>`)}
          </div>
          <div class="thead"><span>北京</span><span>价格</span><span>√/大单</span><span>仓差</span><span>性质</span></div>
          ${TRADES.map((t) => html`<div class="trow">
            <span class="tm ${t[0].length > 3 ? "full" : ""}">${t[0]}</span>
            <span class="v g">${t[1]}</span>
            <span class="v ${t[3]}">${t[2]}</span>
            <span class="v y">${t[4]}</span>
            <span class="ty ${t[6]}">${t[5]}</span>
          </div>`)}
        </div>
      </div>
      <div class="tip">周线</div>
      <div class="sg">
        <svg width="176" height="22" viewBox="0 0 176 22">
          <path d="M-4 1 L15 -4 Q17 -4 17.500 -2 L20.500 14 Q21 17 18 18 L4 22.500 L-4 23Z" fill="#f0531c"></path>
          <text class="slogo" x="0" y="17">S</text>
          <text class="szh" x="26" y="17">中</text>
          <circle cx="51" cy="7" r="1.800" fill="none" stroke="#1b78c8" stroke-width="1.200"></circle>
          <path d="M58 11 C60 11 60 14 57 17" fill="none" stroke="#1b78c8" stroke-width="2"></path>
          <rect x="74" y="2" width="6" height="11" rx="3" fill="#1b78c8"></rect>
          <path d="M71 9 C71 17 83 17 83 9 M77 15 V19 M73 19.500 H81" fill="none" stroke="#1b78c8" stroke-width="1.400"></path>
          <rect x="91" y="4" width="16" height="12" rx="1.500" fill="none" stroke="#1b78c8" stroke-width="1.400"></rect>
          <path d="M94 8h10M94 11h10M96 13.500h6" stroke="#1b78c8" stroke-width="1.400" stroke-dasharray="1.500 .8"></path>
          <circle cx="121" cy="6" r="3.400" fill="#a9b6c6"></circle>
          <path d="M115 18 C115 11 127 11 127 18Z" fill="#a9b6c6"></path>
          <rect x="123" y="10" width="10" height="9" fill="#f6f9fd" stroke="#a9b6c6"></rect>
          <text class="s18" x="124.500" y="17.500">18</text>
          <path d="M140 4 L144 2.500 C145 4 147 4 148 2.500 L152 4 L155 8 L151.500 10 L151 19 L141 19 L140.500 10 L137 8Z" fill="#1b78c8"></path>
          <path d="M160 19 L168 10 C166 6 169 2 173 3 L170 6 L172 8 L175 5 C176 9 172 12 169 11 L162 20Z" fill="#1b78c8"></path>
        </svg>
      </div>
      <div class="bubble">66</div>
      <div class="pill">
        <div><svg width="9" height="10" viewBox="0 0 9 10"><path d="M4.500 0 L9 5 H6 V10 H3 V5 H0Z" fill="#3aa0e8"></path></svg><b>0</b>K/s</div>
        <div><svg width="9" height="10" viewBox="0 0 9 10"><path d="M4.500 10 L9 5 H6 V0 H3 V5 H0Z" fill="#3a9a40"></path></svg><b>0</b>K/s</div>
      </div>
      <div class="gauge">
        <svg width="58" height="58" viewBox="0 0 58 58">
          <defs><linearGradient id="rg" x1="1" y1="0" x2="0" y2="1"><stop offset="0" stop-color="#2dd4c8"></stop><stop offset=".6" stop-color="#8fd060"></stop><stop offset="1" stop-color="#e8c840"></stop></linearGradient></defs>
          <circle cx="29" cy="29" r="29" fill="rgba(38,40,50,.97)"></circle>
          <path d="M29 4 A25 25 0 1 1 8.800 43.700" fill="none" stroke="url(#rg)" stroke-width="1.600"></path>
          <text class="gn" x="12" y="37">65</text><text class="gp" x="39" y="37">%</text>
        </svg>
      </div>
    `;
  }
}
